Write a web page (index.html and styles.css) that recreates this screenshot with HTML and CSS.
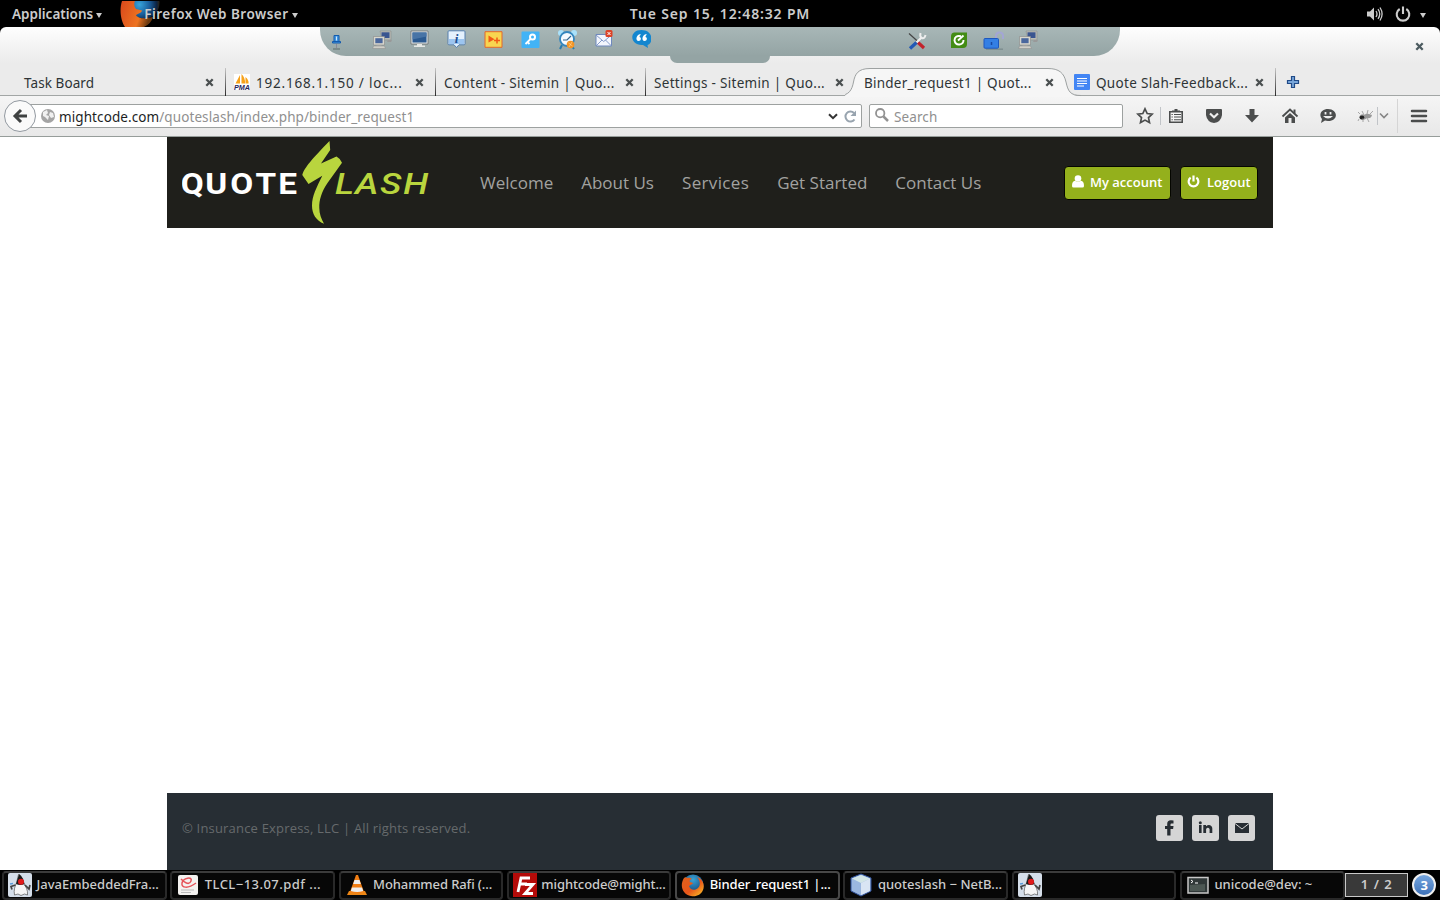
FILE: index.html
```html
<!DOCTYPE html>
<html lang="en">
<head>
<meta charset="utf-8">
<title>Binder_request1 | QuoteSlash</title>
<link rel="stylesheet" href="styles.css">
</head>
<body>
<svg class="defs" width="0" height="0">
  <defs>
    <linearGradient id="fire" x1="0" y1="0" x2="1" y2="1"><stop offset="0" stop-color="#e0621d"/><stop offset=".55" stop-color="#e8561a"/><stop offset="1" stop-color="#ffc928"/></linearGradient>
    <linearGradient id="fire2" x1="0" y1="0" x2="1" y2=".3"><stop offset="0" stop-color="#d9481c"/><stop offset=".7" stop-color="#ee7421"/><stop offset="1" stop-color="#6b3a10"/></linearGradient>
    <radialGradient id="globe" cx=".5" cy=".25" r=".8"><stop offset="0" stop-color="#39a3d6"/><stop offset="1" stop-color="#0b2d63"/></radialGradient>
    <radialGradient id="globe2" cx=".35" cy=".55" r=".65"><stop offset="0" stop-color="#37a5dc"/><stop offset=".5" stop-color="#1a5f9d"/><stop offset=".85" stop-color="#0c2444"/><stop offset="1" stop-color="#2a2113"/></radialGradient>
    <symbol id="x" viewBox="0 0 9 9"><path d="M1.300 1.300l6.400 6.400M7.700 1.300L1.300 7.700" stroke="currentColor" stroke-width="2.300" fill="none"/></symbol>
    <symbol id="pcs" viewBox="0 0 20 20"><path d="M8 1h11v9h-9z" fill="#b9bbb5" stroke="#8c8f8c" stroke-width=".6"/><path d="M9.500 2.300h8V8h-8z" fill="#3a5590"/><path d="M16 10h4l-1 2h-4z" fill="#999"/><path d="M1.500 6.500h11v8.500h-11z" fill="#d7d6cd" stroke="#888" stroke-width=".6"/><path d="M3.300 8.200h7.300v5H3.300z" fill="#4a679d"/><path d="M4.500 15h5v1.500h-5z" fill="#aaa"/><path d="M1.500 16h11l1 2.500H.700z" fill="#d0cfc8" stroke="#888" stroke-width=".5"/></symbol>
    <symbol id="duke" viewBox="0 0 24 24"><rect width="24" height="24" rx="2" fill="#d5dee9"/><path d="M10.500 1.500C13 3 15 7 16 11c2 3 4 6 3.500 11l-3-1-3.500 1.500-3-1.500-3.500 1C5.500 17 7 13 8.500 10z" fill="#f6f6f6" stroke="#555" stroke-width=".7"/><path d="M11 1C14 3 16 7 16.500 11q-4 2-8.500 0z" fill="#1b1b1b"/><circle cx="13" cy="8.700" r="3" fill="#e21b1b"/><path d="M7.500 12l-4.500 1.500 1 3M17 12l4 4 1-4" fill="none" stroke="#444" stroke-width="1.700"/><path d="M2 11l3-.5" stroke="#5b9bd8" stroke-width="1.500"/></symbol>
    <symbol id="firefox" viewBox="0 0 24 24"><circle cx="12" cy="12" r="10.500" fill="url(#globe)"/><path d="M3 5c1-1 2-1 3 0 2-.5 4 0 5 1-2 .5-3 2-2 3l3 1c0 1-3 2-4 3 1 4 6 5 9 2 3-3 2-8-1-11 6 2 8 8 6 13-2 5-7 7-12 6C2 22-2 13 3 5z" fill="url(#fire)"/></symbol>
    <symbol id="power" viewBox="0 0 16 16"><path d="M4.700 3A6.300 6.300 0 1 0 11.300 3M8 .5v7.500" fill="none" stroke="currentColor" stroke-width="2.100"/></symbol>
    <symbol id="power-bold" viewBox="0 0 16 16"><path d="M4.500 3.200A6 6 0 1 0 11.500 3.200M8 .5v7.500" fill="none" stroke="currentColor" stroke-width="2.700"/></symbol>
  </defs>
</svg>

<header class="panel">
  <div class="panel-left">
    <span class="apps">Applications</span><i class="caret"></i>
    <svg class="app-icon" viewBox="0 0 40 26"><circle cx="24" cy="2" r="15.500" fill="url(#globe2)"/><path d="M2 0h13q-2 4 1 8l6 1.500c0 2.500-5 3-6 5 4 4 10 3 17 1.500Q31 23 24 26H5C1 20-1 9 2 0z" fill="url(#fire2)"/></svg>
    <span class="appname">Firefox Web Browser</span><i class="caret"></i>
  </div>
  <div class="clock">Tue Sep 15, 12:48:32 PM</div>
  <div class="panel-right">
    <svg width="17" height="16" viewBox="0 0 17 16"><path d="M1 5.500h3l4-4v13l-4-4H1z" fill="currentColor"/><path d="M10 5q2 3 0 6M12 3.200q3.500 4.800 0 9.600M14 1.500q4.200 6.500 0 13" fill="none" stroke="currentColor" stroke-width="1.300"/></svg>
    <svg width="16" height="16"><use href="#power"/></svg><i class="caret"></i>
  </div>
</header>

<section class="chrome">
  <div class="titlebar"><svg width="9" height="9"><use href="#x"/></svg></div>

  <div class="remote">
    <div class="remote-bar">
      <svg class="pin" width="16" height="20" viewBox="0 0 16 20"><path d="M6 3.500h5v6H6zM4.500 9.500h8v1.500h-8z" fill="#3f94e0" stroke="#145bac"/><path d="M8.500 4.500v4" stroke="#cde7ff"/><path d="M8.500 12v4" stroke="#889"/><path d="M5 17h7" stroke="#71807f" stroke-width="1.500"/></svg>
      <div class="slots">
        <svg viewBox="0 0 20 20"><use href="#pcs"/></svg>
        <svg viewBox="0 0 20 20"><path d="M2 1h17v13H2z" fill="#dfe6e8" stroke="#666" stroke-width=".7"/><path d="M3.500 2.500h14v10h-14z" fill="#2b5a91"/><path d="M3.500 2.500h14v4l-14 3z" fill="#4874a6"/><path d="M8 14h5v2H8zM5 15.500h11v1.500H5z" fill="#e5e8e5"/></svg>
        <svg viewBox="0 0 20 20"><path d="M3 .8h15q1 0 1 1v12q0 1-1 1h-5l-2.500 2.700L8 14.800H3q-1 0-1-1v-12q0-1 1-1z" fill="#e4f1fd" stroke="#557fae"/><path d="M3 9h15v5H3z" fill="#9cc5f0"/><text x="10.500" y="13" class="info">i</text></svg>
        <svg viewBox="0 0 20 20"><path d="M2 1.700h17v15.600H2z" fill="#f8d550" stroke="#e4682a"/><path d="M5.500 5.500l6 3.700-6 3.300z" fill="#f15a16"/><path d="M14 7.500v6M11 10.500h6" stroke="#f15a16" stroke-width="1.500"/></svg>
        <svg viewBox="0 0 20 20"><rect x="1.500" y="1.500" width="18" height="16.500" rx="1" fill="#42b3f6"/><circle cx="12.500" cy="7" r="2.500" fill="none" stroke="#fff" stroke-width="2"/><path d="M10.500 9l-5 5M7.500 12l2 2" stroke="#fff" stroke-width="1.800"/></svg>
        <svg viewBox="0 0 20 20"><path d="M5 15l-2 4M14 15l3 4" stroke="#277bae" stroke-width="2"/><circle cx="4" cy="3" r="3" fill="#a9e1fa"/><circle cx="17" cy="3" r="3" fill="#a9e1fa"/><circle cx="10" cy="9" r="7" fill="#f4faff" stroke="#3386bf" stroke-width="1.800"/><path d="M6 10l4 0 4-4" fill="none" stroke="#33668e" stroke-width="1.200"/><circle cx="13.500" cy="14.500" r="3.800" fill="#f39424"/><path d="M11.500 13l4 3M15 12l-3 5" stroke="#ffd391" stroke-width=".7"/></svg>
        <svg viewBox="0 0 20 20"><path d="M2 4.500h15.500v11.500H2z" fill="#f3f6fd" stroke="#6f89bd"/><path d="M2 5l7.700 6.500L17.500 5M2 16l6-6M17.500 16l-6-6" fill="none" stroke="#7891c3" stroke-width=".9"/><rect x="11.500" y="0" width="7" height="7" rx="1.500" fill="#dc4226"/><path d="M13.500 2l3 3m0-3l-3 3" stroke="#fff"/></svg>
        <svg viewBox="0 0 20 20"><path d="M10.500 0c12 0 12 13.500 6 15l.5 3-5-3C-1.500 16-2.500 0 10.500 0z" fill="#1486cf"/><path d="M9.500 4c-5 1-5 7-2 7 3 0 3-4 1-4q0-1.500 1-2zm6 0c-5 1-5 7-2 7 3 0 3-4 1-4q0-1.500 1-2z" fill="#fff"/></svg>
      </div>
      <svg class="tools" viewBox="0 0 24 20"><path d="M4 2.500l10 9" stroke="#444" stroke-width="1.200"/><path d="M12.500 11l6.500 6" stroke="#c3222b" stroke-width="3.200"/><path d="M16.500 6.500l-5 5" stroke="#eee" stroke-width="2.300"/><path d="M15.500 2q-1 4 1.500 5t3.500-3" fill="none" stroke="#eee" stroke-width="2"/><path d="M11.500 11.500L5 17.500" stroke="#2259b5" stroke-width="3.300"/></svg>
      <svg class="green" viewBox="0 0 24 20"><path d="M7.500 2.500H20V14q0 4-4 4H4V6.500q0-4 3.500-4z" fill="#438c14"/><path d="M14 6.200Q7.500 5 7.500 10.500q1 4.500 5 4t4-4.500M11 10.500l5.500-5" fill="none" stroke="#fff" stroke-width="1.900"/></svg>
      <svg class="lock" viewBox="0 0 24 20"><path d="M14 7.500V5q0-3.500 3.500-3.500T21 5v3" fill="none" stroke="#a3a6d4" stroke-width="2"/><path d="M4 18.200h17" stroke="#7e8f90" stroke-width="1.500"/><rect x="2" y="7.500" width="14.500" height="9.700" rx="1" fill="#347fe4" stroke="#1e57bd"/><path d="M9.500 11v3" stroke="#1849a3" stroke-width="1.500"/></svg>
      <svg class="pcs2" viewBox="0 0 20 20"><use href="#pcs"/></svg>
    </div>
    <div class="remote-tab"></div>
  </div>

  <div class="tabs">
    <div class="tab"><span class="t1">Task Board</span><svg class="close"><use href="#x"/></svg></div>
    <div class="tab"><svg class="fav" viewBox="0 0 16 16"><path d="M0 0h16v16H0z" fill="#fff"/><path d="M6 1L1.500 9.500H6zM7.500 0v9.500h3.500Q11.500 4 7.500 0zm4 3q3.500 3 3 6.500h-3z" fill="#f7a21b"/><text x="0" y="16" class="pma" textLength="16" lengthAdjust="spacingAndGlyphs">PMA</text></svg><span class="t2">192.168.1.150 / loc...</span><svg class="close"><use href="#x"/></svg></div>
    <div class="tab"><span class="t3">Content - Sitemin | Quo...</span><svg class="close"><use href="#x"/></svg></div>
    <div class="tab last"><span class="t4">Settings - Sitemin | Quo...</span><svg class="close"><use href="#x"/></svg></div>
    <div class="tab active"><svg class="tabshape" viewBox="0 0 236 29"><path d="M-4 28C4 28 7 22 8.500 14S13 .5 25 .5H203C214 .5 219 5 221 14S225 28 235 28V29H0z" fill="#f6f6f6"/><path d="M-6 27.500C4 27.500 7 22 8.500 14S13 .5 25 .5H203C214 .5 219 5 221 14S225 27.500 236 27.500" fill="none" stroke="#9da1a1"/></svg><span class="t5">Binder_request1 | Quot...</span><svg class="close"><use href="#x"/></svg></div>
    <div class="tab"><svg class="fav" viewBox="0 0 16 16"><rect width="16" height="16" rx="1" fill="#4285f4"/><path d="M3 4.500h10M3 7h10M3 9.500h10M3 12h7" stroke="#fff" stroke-width="1.200"/></svg><span class="t6">Quote Slah-Feedback...</span><svg class="close"><use href="#x"/></svg></div>
    <svg class="plus" viewBox="0 0 14 14"><path d="M5.500 1.500h3v4h4v3h-4v4h-3v-4h-4v-3h4z" fill="#78a6da" stroke="#204a87" stroke-width="1.200"/></svg>
  </div>

  <div class="navbar">
    <div class="back"><svg width="16" height="16" viewBox="0 0 16 16"><path d="M9 2L3 8l6 6M3.500 8H15" fill="none" stroke="#3f4242" stroke-width="3"/></svg></div>
    <div class="url">
      <svg width="14" height="14" viewBox="0 0 14 14"><circle cx="7" cy="7" r="7" fill="#a4a4a4"/><path d="M2 3l4-2 1 3-2 2 3 1-1 4-3-3-2-1zM9 3l3 1 1 4-3 1-2-3z" fill="#f0f0f0"/></svg>
      <span class="address"><b>mightcode.com</b>/quoteslash/index.php/binder_request1</span>
      <svg width="10" height="7" viewBox="0 0 10 7"><path d="M1 1.200l4 4 4-4" fill="none" stroke="#333" stroke-width="2"/></svg>
      <svg class="reload" width="13" height="13" viewBox="0 0 13 13"><path d="M10.500 9.500A5 5 0 1 1 10 3" fill="none" stroke="#98a4af" stroke-width="2"/><path d="M12 .5v5.500H6.500z" fill="#98a4af"/></svg>
    </div>
    <div class="search"><svg width="14" height="14" viewBox="0 0 14 14"><circle cx="5.200" cy="5.200" r="4.200" fill="none" stroke="#929292" stroke-width="1.800"/><path d="M8.500 8.500l4.500 4.500" stroke="#929292" stroke-width="2.500"/></svg><span>Search</span></div>
    <div class="actions">
      <svg viewBox="0 0 18 18"><path d="M9 1.800l2.200 4.700 5 .6-3.700 3.500 1 5L9 13.100l-4.500 2.500 1-5-3.700-3.500 5-.6z" fill="none" stroke="currentColor" stroke-width="1.700"/></svg>
      <i class="sep s1"></i>
      <svg viewBox="0 0 18 18"><path d="M2.800 4.800h12.400v10.400H2.800z" fill="#f5f5f5" stroke="currentColor" stroke-width="1.600"/><path d="M5 5V3.500h2.500V2h3v1.500H13V5z" fill="currentColor"/><path d="M4.500 7.500h1.300M7 7.500h7M4.500 10h1.300M7 10h7M4.500 12.700h1.300M7 12.700h7" stroke="currentColor" stroke-width="1.100"/></svg>
      <svg viewBox="0 0 18 18"><path d="M2 2h14q1 0 1 1v5q-1 7-8 8Q2 15 1 8V3q0-1 1-1z" fill="currentColor"/><path d="M5 6.500l4 3.700 4-3.700" fill="none" stroke="#eee" stroke-width="2.200"/></svg>
      <svg viewBox="0 0 18 18"><path d="M6.500 2h5v6H16l-7 7.500L2 8h4.500z" fill="currentColor"/></svg>
      <svg viewBox="0 0 18 18"><path d="M1.500 9.500L9 2.500l7.500 7" fill="none" stroke="currentColor" stroke-width="1.800"/><path d="M4 10.500l5-4.600 5 4.600V16h-3.500v-5h-3v5H4zM12.500 2.500h2v4h-2z" fill="currentColor"/></svg>
      <svg viewBox="0 0 18 18"><path d="M9 2c10 0 11 12 0 12q-2 0-3-.4L2 16l1-4C-1 7 3 2 9 2z" fill="currentColor"/><path d="M6.500 5v2.500M11.500 5v2.500" stroke="#eee" stroke-width="1.800"/><path d="M4 9q5 5 10 0z" fill="#eee"/></svg>
      <svg viewBox="0 0 18 18" class="bug"><path d="M2 10q2-4 5-2 3-2 5-1l3 1q-1 4-5 3-3 3-7 1z" fill="#999"/><ellipse cx="5" cy="10.500" rx="2.300" ry="2" fill="#222"/><path d="M3 7L1 5m6 3L5 4m5 3l1-4m2 4l3-3m-6 7l2 4m-6-4v4M2 12l-1 2" stroke="#888" stroke-width=".7"/></svg>
      <i class="sep s2"></i>
      <svg class="chev" viewBox="0 0 10 8"><path d="M1 1.500l4 4 4-4" fill="none" stroke="#858585" stroke-width="1.600"/></svg>
      <i class="sep s3"></i>
      <svg viewBox="0 0 18 18"><path d="M2 4h14M2 9h14M2 14h14" stroke="currentColor" stroke-width="2.500" stroke-linecap="round"/></svg>
    </div>
  </div>
</section>

<main class="viewport">
  <div class="site">
    <div class="site-head">
      <svg class="logo" viewBox="0 0 248 84">
        <text class="lg white" transform="scale(1.15 1)" x="-1 20.300 42 64 83.700" y="54">QUOTE</text>
        <path d="M147.500 1l.7 9L139 23.500l15.500-7q4 2.200 5.500 6.200L145.500 43c-6 9-8.500 17-8.200 25 0 6 2 11 4.700 15.700-8-3-12-10-12-18 0-10 4.500-18 10.300-30L126.500 44l-6.200-9C122 28 130 19 147.500 1z" fill="#b9d53e"/>
        <text class="lg lime" transform="scale(1.25 1)" x="122.500 138.500 158.500 177" y="54">LASH</text>
      </svg>
      <nav class="menu"><a class="m1">Welcome</a><a class="m2">About Us</a><a class="m3">Services</a><a class="m4">Get Started</a><a class="m5">Contact Us</a></nav>
      <div class="buttons">
        <a class="btn acct"><svg width="12" height="13" viewBox="0 0 12 13"><circle cx="6" cy="3.500" r="3.300" fill="#fff"/><path d="M0 11q0-5 3-5.200 3 2 6 0Q12 6 12 11q0 1.500-1.500 1.500h-9Q0 12.500 0 11z" fill="#fff"/></svg><span>My account</span></a>
        <a class="btn out"><svg width="13" height="13"><use href="#power-bold"/></svg><span>Logout</span></a>
      </div>
    </div>
    <div class="site-foot">
      <span class="copy">© Insurance Express, LLC | All rights reserved.</span>
      <div class="social">
        <svg viewBox="0 0 27 26"><rect width="27" height="26" rx="3" fill="#d5d5d5"/><path d="M17.500 5.500v3h-2q-1 0-1 1V11H17.500l-.4 3h-2.600v6.500h-3.300V14H9v-3h2.200V9q0-3.700 3.700-3.700z" fill="#272d33"/></svg>
        <svg viewBox="0 0 27 26"><rect width="27" height="26" rx="3" fill="#d5d5d5"/><path d="M7 10h2.600v8H7zM11.300 10h2.700v1.200q3-2.500 5.500 0 .8 1 .8 2.300V18h-2.700v-4q-1.800-2.500-3.500 0v4h-2.800z" fill="#272d33"/><circle cx="8.300" cy="7.800" r="1.500" fill="#272d33"/></svg>
        <svg viewBox="0 0 27 26"><rect width="27" height="26" rx="3" fill="#d5d5d5"/><path d="M7 8h14v10H7z" fill="#272d33"/><path d="M7 8.500l7 5.500 7-5.500" fill="none" stroke="#d5d5d5"/></svg>
      </div>
    </div>
  </div>
</main>

<footer class="taskbar">
  <div class="task"><svg viewBox="0 0 24 24"><use href="#duke"/></svg><span class="k1">JavaEmbeddedFra...</span></div>
  <div class="task"><svg viewBox="0 0 24 24"><rect x="2" y="2" width="20" height="20" rx="2" fill="#f4f2f0"/><path d="M20 10C12 16 5 15 6 10S17 3 15 8 8 9 5 6" fill="none" stroke="#e6545a" stroke-width="1.500"/><path d="M5 17h13M5 19.500h10" stroke="#bbb"/></svg><span class="k2">TLCL−13.07.pdf ...</span></div>
  <div class="task"><svg viewBox="0 0 24 24"><path d="M4 18h16l2 4H2z" fill="#ed8716"/><path d="M11 2h2l6 17q-7 3-14 0z" fill="#f17e14"/><path d="M9.500 7h5l1.300 4H8.200zM7 14.500h10l1.200 3.500q-6 2-12.400 0z" fill="#eee"/></svg><span class="k3">Mohammed Rafi (...</span></div>
  <div class="task"><svg viewBox="0 0 24 24"><rect width="24" height="24" fill="#b40b09"/><path d="M5 19L8 5h9M7 11h7M12 11.500h8l-8 9h8" fill="none" stroke="#fff" stroke-width="2.800"/></svg><span class="k4">mightcode@might...</span></div>
  <div class="task current"><svg viewBox="0 0 24 24"><use href="#firefox"/></svg><span class="k5">Binder_request1 |...</span></div>
  <div class="task"><svg viewBox="0 0 24 24"><path d="M12 1l10 4v13l-10 5L2 18V5z" fill="#9bb7e0" stroke="#31529a"/><path d="M12 2l9 3.500L12 10 3 5.500z" fill="#d3e6e7"/><path d="M12 10l9-4.500V18l-9 4z" fill="#d9e5f4"/></svg><span class="k6">quoteslash − NetB...</span></div>
  <div class="task"><svg viewBox="0 0 24 24"><use href="#duke"/></svg></div>
  <div class="task"><svg viewBox="0 0 24 24"><rect x="2" y="4.500" width="20" height="15.500" fill="#303838" stroke="#c8c8c8" stroke-width="1.500"/><path d="M4 12l15-1v7H4z" fill="#4c5753"/><path d="M5 7l2 1.500L5 10M9 10h3" fill="none" stroke="#fff"/></svg><span class="k8">unicode@dev: ~</span></div>
  <div class="pager">1 / 2</div>
  <div class="badge">3</div>
</footer>
</body>
</html>
```
FILE: styles.css
```css
* { box-sizing: border-box; }
body { margin: 0; width: 1440px; height: 900px; overflow: hidden; display: flex; flex-direction: column; background: #000; font-family: "Noto Sans", "Open Sans", sans-serif; font-size: 13.5px; }
svg { display: block; flex: none; }
.defs { position: absolute; }
span, a { white-space: nowrap; }

.panel { height: 27px; display: grid; grid-template-columns: 1fr auto 1fr; align-items: center; color: #ccc; font-weight: 600; }
.panel-left { display: flex; align-items: center; padding-left: 12px; height: 27px; }
.caret { border: 3px solid transparent; border-top: 5px solid #ccc; border-bottom: 0; margin: 4px 0 0 3px; }
.app-icon { width: 40px; height: 26px; margin-left: 18px; margin-right: -16px; }
.appname { position: relative; letter-spacing: .47px; }
.appname + .caret { margin-left: 4px; }
.clock { font-size: 14px; letter-spacing: .85px; }
.panel-right { display: flex; justify-content: flex-end; align-items: center; padding-right: 14px; gap: 12px; }
.panel-right .caret { margin-left: -3px; }

.chrome { height: 110px; position: relative; border-radius: 6px 6px 0 0; background: linear-gradient(#fefefe, #ebebeb 36px); color: #2e3436; }
.titlebar { height: 41px; display: flex; justify-content: flex-end; padding: 15px 16px 0 0; color: #4c5b60; }
.remote { position: absolute; left: 320px; top: 0; width: 800px; }
.remote-bar { height: 29px; display: flex; border-radius: 0 0 26px 26px; background: linear-gradient(#a8b7b7, #94a4a4); }
.remote-tab { width: 100px; height: 7px; margin: 0 auto; border-radius: 0 0 9px 9px; background: #94a4a4; }
.pin { margin: 5px 0 0 8px; }
.slots { display: flex; margin-left: 20px; padding-top: 3px; }
.slots svg { width: 20px; height: 20px; margin: 0 9px 0 8px; }
.tools, .green, .lock { width: 24px; height: 20px; margin-top: 3px; }
.tools { margin-left: 245px; margin-top: 4px; }
.green { margin-left: 18px; }
.lock { margin-left: 11px; margin-top: 4px; }
.pcs2 { width: 20px; height: 20px; margin: 3px 0 0 12px; }
.info { font: italic bold 13px "Liberation Serif", serif; text-anchor: middle; fill: #1c4f91; }
.pma { font: italic bold 7px "Liberation Sans", sans-serif; fill: #26245c; }

.tabs { height: 28px; display: flex; padding-left: 16px; border-bottom: 1px solid #a2a6a5; align-items: stretch; }
.tab { width: 210px; height: 28px; display: flex; align-items: center; padding: 2px 11px 0 8px; position: relative; border-right: 1px solid; border-image: linear-gradient(#ccc, #222) 1; }
.tab.last, .tab.active { border-image: none; border-color: transparent; }
.tab span { position: relative; }
.t1 { letter-spacing: .08px; }
.t2 { letter-spacing: .8px; }
.t3 { letter-spacing: .32px; }
.t4 { letter-spacing: .3px; }
.t5 { letter-spacing: .24px; }
.t6 { letter-spacing: .32px; }
.close { width: 9px; height: 9px; margin-left: auto; margin-bottom: 2px; position: relative; color: #4a4f50; }
.fav { width: 16px; height: 16px; margin: 0 6px 2px 0; }
.tabshape { position: absolute; left: -11px; top: 0; width: 236px; height: 29px; }
.plus { width: 14px; height: 14px; margin: 7px 0 0 10px; }

.navbar { height: 41px; display: flex; padding: 8px 0 0 4px; border-bottom: 1px solid #969d9a; background: linear-gradient(#f5f5f5, #e8e8e8); }
.back { width: 32px; height: 32px; margin-top: -4px; border: 1px solid #9299a0; border-radius: 50%; background: #fafafa; display: flex; align-items: center; justify-content: center; position: relative; }
.url { width: 842px; height: 24px; margin-left: -16px; border: 1px solid #9da1a0; border-radius: 2px; background: #fff; display: flex; align-items: center; padding: 0 4px 0 20px; color: #909090; }
.address { margin-left: 4px; margin-right: auto; padding-top: 2px; letter-spacing: .09px; }
.address b { font-weight: 400; color: #1d1f1f; }
.reload { margin-left: 6px; }
.search { width: 254px; height: 24px; margin-left: 7px; border: 1px solid #9da1a0; border-radius: 2px; background: #fff; display: flex; align-items: center; padding-left: 5px; color: #909090; }
.search svg { margin-bottom: 2px; }
.search span { margin-left: 5px; padding-top: 2px; letter-spacing: .1px; }
.actions { display: flex; height: 24px; align-items: center; margin-left: 13px; color: #4b4d4d; }
.actions svg { width: 18px; height: 18px; }
.actions svg + svg { margin-left: 20px; }
.sep { width: 1px; height: 18px; background: #c1c4c8; }
.s1 { margin: 0 6px 0 6px; }
.s2 { margin: 0 1px 0 2px; }
.s3 { height: 34px; margin: 0 12px 0 8px; background: #d5d5d5; }
.actions .chev { width: 10px; height: 8px; }

.viewport { height: 733px; background: #fff; display: flex; justify-content: center; }
.site { width: 1106px; display: flex; flex-direction: column; justify-content: space-between; }
.site-head { height: 91px; background: #1f1f1b; display: flex; padding: 0 15px; align-items: center; }
.logo { width: 248px; height: 84px; margin-bottom: 2px; }
.lg { font: 700 29px "Roboto", sans-serif; }
.white { fill: #fff; }
.lime { fill: #b9d53e; font-style: italic; font-weight: 500; }
.menu { display: flex; margin-left: 50px; gap: 28px; font: 17px "Open Sans", sans-serif; color: #a2a2a0; }
.m3 { letter-spacing: .35px; }
.buttons { display: flex; gap: 9px; margin-left: auto; }
.btn { height: 34px; border: 1px solid #050600; border-radius: 4px; background: #94b01c; display: flex; align-items: center; gap: 7px; padding: 0 0 2px 7px; color: #fff; font: 600 13px "Open Sans", sans-serif; }
.acct { width: 107px; gap: 6px; }
.out { width: 78px; padding-left: 6px; }
.site-foot { height: 77px; background: #272e34; display: flex; justify-content: space-between; padding: 22px 18px 0 15px; font: 13px "Open Sans", sans-serif; color: #666a6c; }
.copy { padding-top: 4px; letter-spacing: .19px; }
.social { display: flex; gap: 9px; }
.social svg { width: 27px; height: 26px; }

.taskbar { height: 30px; background: #000; display: flex; align-items: center; padding-left: 2px; color: #ccc; font-weight: 500; font-size: 13px; }
.task { width: 164.600px; height: 29px; margin-right: 3.700px; border: 2px solid #292929; border-top-color: #3b3b3b; border-radius: 4px; background: #070707; display: flex; align-items: center; padding-left: 4px; overflow: hidden; flex: none; }
.task svg { width: 24px; height: 24px; }
.task span { margin-left: 4.500px; padding-bottom: 2px; }
.task.current { border-color: #484848; color: #fff; }
.k2 { letter-spacing: .45px; }
.k3, .k4, .k5 { letter-spacing: -.1px; }
.pager { width: 63px; height: 24px; margin-left: -3px; border: 1px solid #c9c9c9; background: #393939; font-weight: 600; letter-spacing: 1px; text-align: center; line-height: 21px; flex: none; }
.badge { width: 24px; height: 24px; margin-left: 4px; border: 2px solid #eee; border-radius: 50%; background: linear-gradient(#76a6df, #3d71b8); color: #fff; font-weight: 700; line-height: 20px; text-align: center; flex: none; }
```
